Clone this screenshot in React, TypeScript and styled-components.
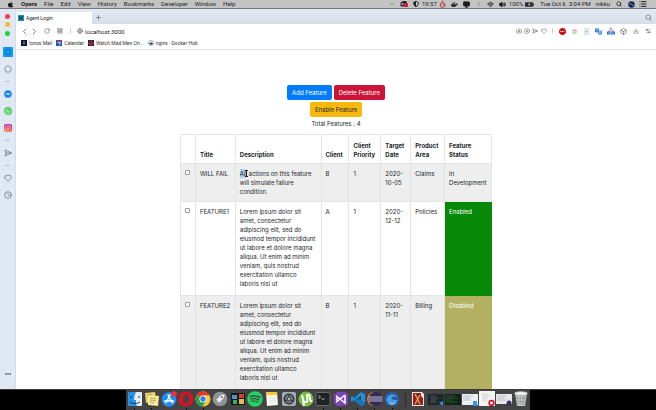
import React from "react";
import styled, { createGlobalStyle } from "styled-components";
import {
  Bluetooth,
  Box,
  Camera,
  ChevronLeft,
  ChevronRight,
  CircleX,
  Clock,
  Download,
  Globe,
  Heart,
  LayoutGrid,
  List,
  Monitor,
  Pentagon,
  Plus,
  RotateCw,
  Search,
  SendHorizontal,
  Settings2,
  Timer,
  Volume2,
  Wifi,
} from "lucide-react";
import { FaApple, FaDocker, FaFacebookMessenger, FaWhatsapp, FaInstagram, FaShieldAlt, FaSpotify } from "react-icons/fa";

const GlobalStyle = createGlobalStyle`
  * { box-sizing: border-box; }
  body {
    margin: 0;
    background: #000;
    color: #212529;
    font: 6px/9px Inter, "Liberation Sans", sans-serif;
  }
  button, input { font: inherit; color: inherit; }
`;

const chromeFont = `Roboto, "Liberation Sans", sans-serif`;

const Desktop = styled.div`
  display: flex;
  flex-direction: column;
  height: 100vh;
  overflow: hidden;
`;

const PlainButton = styled.button`
  display: inline-flex;
  align-items: center;
  justify-content: center;
  padding: 0;
  border: 0;
  background: none;
  white-space: nowrap;
`;

/* System menu bar */

const MenuBar = styled.header`
  display: flex;
  flex: none;
  justify-content: space-between;
  height: 9px;
  padding: 0 7px;
  background: #c3c3c3;
  border-bottom: 1px solid #74777d;
  color: #1d1d1d;
  font-family: ${chromeFont};
  line-height: 8px;
`;

const MenuList = styled.nav`
  display: flex;
  align-items: center;
  gap: 7px;
`;

const MenuItem = styled(PlainButton)<{ $strong?: boolean }>`
  font-weight: ${(p) => (p.$strong ? 700 : 400)};
`;

const StatusArea = styled.div`
  display: flex;
  align-items: center;
  font-weight: 400;
`;

const StatusSlot = styled(PlainButton)<{ $color?: string }>`
  width: 12px;
  color: ${(p) => p.$color ?? "#1d1d1d"};
`;

const StatusText = styled.span<{ $gap?: number }>`
  margin-right: ${(p) => p.$gap ?? 0}px;
  white-space: nowrap;
`;

/* Browser window */

const BrowserWindow = styled.div`
  display: grid;
  flex: 1;
  grid-template-columns: 16px minmax(0, 1fr);
  min-height: 0;
  background: #fff;
`;

const Sidebar = styled.aside`
  display: flex;
  flex-direction: column;
  align-items: center;
  padding: 3px 0 7px;
  background: #e0e8f3;
  border-right: 1px solid #d3dce9;
`;

const WindowControls = styled.div`
  display: flex;
  flex-direction: column;
  align-items: center;
  justify-content: space-around;
  height: 26px;
  margin-bottom: 5px;
`;

const TrafficLight = styled.button<{ $color: string }>`
  width: 5px;
  height: 5px;
  padding: 0;
  border: 0;
  border-radius: 50%;
  background: ${(p) => p.$color};
`;

const SideButton = styled(PlainButton)<{ $last?: boolean }>`
  width: 16px;
  height: 17px;
  margin-top: ${(p) => (p.$last ? "auto" : 0)};
  color: #5c626b;
`;

const SideRule = styled.hr`
  width: 5px;
  margin: 4px 0 3px;
  border: 0;
  border-top: 1px solid #bfc7d2;
`;

const Badge = styled.span<{ $color: string; $shape?: "circle" | "square" }>`
  display: inline-flex;
  align-items: center;
  justify-content: center;
  width: 8px;
  height: 8px;
  border-radius: ${(p) => (p.$shape === "square" ? "2px" : "50%")};
  background: ${(p) => p.$color};
  color: #fff;
`;

const Viewport = styled.div`
  display: flex;
  flex-direction: column;
  min-width: 0;
  min-height: 0;
`;

const TabStrip = styled.div`
  display: flex;
  flex: none;
  align-items: flex-end;
  height: 15px;
  background: linear-gradient(#e3eaf3, #d6dde8);
`;

const Tab = styled.button`
  display: flex;
  align-items: center;
  gap: 2px;
  width: 76px;
  height: 12px;
  padding: 0 2px;
  border: 0;
  background: #fff;
  font-family: ${chromeFont};
  font-size: 5px;
`;

const StripButton = styled(PlainButton)<{ $end?: boolean }>`
  width: 12px;
  height: 13px;
  margin-left: ${(p) => (p.$end ? "auto" : 0)};
  margin-right: ${(p) => (p.$end ? "2px" : 0)};
  color: #555;
`;

const Toolbar = styled.div`
  display: flex;
  flex: none;
  align-items: center;
  height: 14px;
  padding: 0 2px;
`;

const ToolButton = styled(PlainButton)<{ $width?: number }>`
  width: ${(p) => p.$width ?? 12}px;
  color: #555;
`;

const Divider = styled.span<{ $width: number }>`
  display: flex;
  justify-content: center;
  width: ${(p) => p.$width}px;
  &::before {
    content: "";
    width: 1px;
    height: 6px;
    background: #d5d5d5;
  }
`;

const Address = styled.input`
  flex: 1;
  min-width: 0;
  height: 11px;
  padding: 0;
  border: 0;
  background: none;
  font-family: ${chromeFont};
  font-weight: 400;
  outline: none;
`;

const Bookmarks = styled.nav`
  display: flex;
  flex: none;
  gap: 4px;
  height: 12px;
  padding: 0 5px 1px;
  border-bottom: 1px solid #e4e4e4;
`;

const Bookmark = styled.a`
  display: flex;
  align-items: center;
  gap: 2px;
  color: #333;
  font-family: ${chromeFont};
  font-size: 5px;
  text-decoration: none;
  white-space: nowrap;
`;

/* Page */

const Page = styled.main`
  display: flex;
  flex: 1;
  flex-direction: column;
  align-items: center;
  min-height: 0;
  padding-top: 35px;
  overflow: hidden;
`;

const ButtonRow = styled.div`
  display: flex;
  gap: 2px;
  margin-bottom: 2px;
`;

const variants = {
  primary: ["#007bff", "#fff"],
  danger: ["#cb1437", "#fff"],
  warning: ["#f7b90d", "#212529"],
} as const;

const ActionButton = styled.button<{ $variant: keyof typeof variants }>`
  height: 15px;
  padding: 0 5px;
  border: 0;
  border-radius: 2px;
  background: ${(p) => variants[p.$variant][0]};
  color: ${(p) => variants[p.$variant][1]};
  white-space: nowrap;
`;

const Total = styled.p`
  margin: 0 0 6px;
`;

const Table = styled.table`
  flex: none;
  width: 100%;
  max-width: 312px;
  border-collapse: collapse;
  table-layout: fixed;
`;

const Col = styled.col<{ $share: number }>`
  width: ${(p) => (p.$share * 100) / 312}%;
`;

const HeadCell = styled.th`
  height: 29px;
  padding: 4px;
  border: 1px solid #e1e4e8;
  font-weight: 700;
  text-align: left;
  vertical-align: bottom;
`;

const Row = styled.tr<{ $height: number }>`
  height: ${(p) => p.$height}px;
  &:nth-child(odd) {
    background: #eeeeee;
  }
`;

const statusColors: Record<string, string> = {
  Enabled: "#078807",
  Disabled: "#b3b062",
};

const Cell = styled.td<{ $status?: string }>`
  padding: 5px 4px 4px;
  border: 1px solid #e1e4e8;
  border-color: ${(p) => statusColors[p.$status ?? ""] ?? "#e1e4e8"};
  background: ${(p) => statusColors[p.$status ?? ""] ?? "transparent"};
  color: ${(p) => (statusColors[p.$status ?? ""] ? "#fff" : "inherit")};
  vertical-align: top;
`;

const Check = styled.input`
  display: block;
  width: 5px;
  height: 5px;
  margin: 1px 0 0;
  appearance: none;
  border: 1px solid #999;
  border-radius: 1px;
  background: #fff;
  &:checked {
    background: #007bff;
  }
`;

const Description = styled.div`
  position: relative;
  isolation: isolate;
`;

const Selection = styled.span`
  position: absolute;
  z-index: -1;
  top: 0;
  left: 0;
  width: 6px;
  height: 9px;
  background: #a9cff5;
`;

const TextCursor = styled.svg`
  position: absolute;
  top: 1px;
  left: 5px;
`;

/* Dock */

const DockArea = styled.footer`
  display: flex;
  flex: none;
  justify-content: center;
  height: 21px;
  border-top: 1px solid #3c3c3c;
  background: #000;
`;

const Dock = styled.div`
  display: flex;
  width: 404px;
  background: #444;
`;

const DockItem = styled.button<{ $running?: boolean }>`
  display: flex;
  flex: 1;
  flex-direction: column;
  align-items: center;
  gap: 1px;
  padding: 1px 0 0;
  border: 0;
  background: none;
  &::after {
    content: "";
    width: 1px;
    height: 1px;
    background: ${(p) => (p.$running ? "#000" : "transparent")};
  }
`;

const DockRule = styled.span`
  width: 9px;
  &::before {
    content: "";
    display: block;
    width: 1px;
    height: 15px;
    margin: 2px auto;
    background: #2c2c2c;
  }
`;

const Glyph = ({ children, size = 16 }: { children: React.ReactNode; size?: number }) => (
  <svg width={size} height={size} viewBox="0 0 16 16" aria-hidden="true">
    {children}
  </svg>
);

type App = { name: string; running?: boolean; art: React.ReactNode };

const apps: App[] = [
  {
    name: "Finder",
    running: true,
    art: (
      <>
        <rect x="1" y="1" width="14" height="14" rx="1" fill="#e6edf5" />
        <path d="M1 1h8C7 5 7 8 7 9h2c0 3 0 4 1 6H1z" fill="#2793e6" />
        <path d="M4 5v2M12 5v2M3 11c3 2 7 2 10 0" stroke="#17324d" fill="none" />
      </>
    ),
  },
  {
    name: "Stickies",
    running: true,
    art: (
      <>
        <path d="M1 2l10-1 1 9-10 2z" fill="#e9d672" />
        <path d="M4 4l11 1-1 10-10-1z" fill="#f6e99a" />
        <path d="M6 7l6 .5M6 9l6 .5M6 11l4 .5M3 4l5-.5" stroke="#a38c36" strokeWidth=".7" />
      </>
    ),
  },
  {
    name: "App Store",
    art: (
      <>
        <circle cx="8" cy="8.500" r="7.300" fill="#1b8df3" />
        <path d="M9 4L5 12M7 4l4.500 8M3.500 10h9" stroke="#fff" strokeWidth="1.400" strokeLinecap="round" />
        <circle cx="13" cy="3" r="2.800" fill="#f02f36" />
      </>
    ),
  },
  {
    name: "Opera",
    running: true,
    art: (
      <path
        fillRule="evenodd"
        d="M8 .5a7.500 7.500 0 100 15 7.500 7.500 0 000-15zM8 3c2 0 3 2.200 3 5s-1 5-3 5-3-2.200-3-5 1-5 3-5z"
        fill="#dc1020"
      />
    ),
  },
  {
    name: "Chrome",
    running: true,
    art: (
      <>
        <circle cx="8" cy="8" r="7.500" fill="#f8cc2e" />
        <path d="M8 8L1.500 4.300a7.500 7.500 0 0113-.1H8z" fill="#e5382d" />
        <path d="M8 8L1.500 4.300A7.500 7.500 0 007.500 15.500L11 10z" fill="#28a04b" />
        <circle cx="8" cy="8" r="3.600" fill="#fff" />
        <circle cx="8" cy="8" r="2.700" fill="#397fe8" />
      </>
    ),
  },
  {
    name: "Launchpad",
    art: (
      <>
        <circle cx="8" cy="8" r="7.300" fill="#8d9399" />
        <path d="M12.500 3.500c-3 0-5 1.500-6.500 4l-2 .5 1.500 1L5 11l2-.5 1 1.500.7-2.200c2.500-1.500 3.800-3.500 3.800-6.300z" fill="#f4f4f4" />
        <circle cx="9.800" cy="6.200" r="1" fill="#555" />
      </>
    ),
  },
  {
    name: "Mission Control",
    art: (
      <>
        <rect x="1" y="2" width="14" height="12" rx="1" fill="#15191c" />
        <path d="M2 4h5v4H2z" fill="#4d94ce" />
        <path d="M9 3h5v4H9z" fill="#ce4138" />
        <path d="M3 9h4v4H3z" fill="#42ad57" />
        <path d="M9 8h5v5H9z" fill="#e4bd4b" />
      </>
    ),
  },
  { name: "Spotify", art: null },
  {
    name: "Notes",
    art: (
      <>
        <path d="M2 1l11 0 1 13-11 1z" fill="#faf9f2" />
        <path d="M2 1h11l.3 3-11 .3z" fill="#f4c733" />
        <path d="M5 7h7M5 9h7M5 11h7" stroke="#d2d0c8" strokeWidth=".6" />
      </>
    ),
  },
  {
    name: "System Preferences",
    art: (
      <>
        <rect x="1" y="1" width="14" height="14" rx="2" fill="#a3abb2" />
        <circle cx="8" cy="8" r="4.800" fill="#7b8187" stroke="#25292c" strokeWidth="1.300" />
        <circle cx="8" cy="8" r="2" fill="#b4babf" stroke="#303437" />
        <path d="M8 6V3M9.700 9l2.700 1.500M6.300 9l-2.700 1.500" stroke="#303437" />
      </>
    ),
  },
  {
    name: "Torrent client",
    art: (
      <>
        <circle cx="8" cy="8" r="7.500" fill="#70be3b" />
        <path d="M4 4l1.500 6c.5 1.800 3.700 1.500 4-.5L9 4l2.300-.3 1 5.300c.3 1.500 1 1.500 2 1" fill="none" stroke="#fff" strokeWidth="2" />
        <path d="M5 9l1 6" stroke="#fff" strokeWidth="2" />
      </>
    ),
  },
  {
    name: "Terminal",
    running: true,
    art: (
      <>
        <rect x="1" y="1.500" width="14" height="13" rx="1" fill="#202326" stroke="#8a8d8f" strokeWidth=".6" />
        <path d="M3.500 4.500l2 1.500-2 1.500M6.500 8h3" stroke="#ddd" fill="none" strokeWidth=".8" />
      </>
    ),
  },
  {
    name: "Visual Studio",
    running: true,
    art: (
      <>
        <path d="M1 4l3-3h8l3 2v10l-3 2H4l-3-3z" fill="#7c45b8" />
        <path d="M4 5.500v5L7 8zM12 4v8L4 5.500m0 5L12 4" fill="none" stroke="#fff" strokeWidth="1.500" />
      </>
    ),
  },
  {
    name: "Code editor",
    running: true,
    art: (
      <>
        <path d="M11 1l4 2v10l-4 2-7-6-2 2-1-1V6l1-1 2 2z" fill="#1d91df" />
        <path d="M11 4.500v7L6.500 8z" fill="#35434e" />
        <path d="M2 5l9 10 4-2V11z" fill="#1275b7" />
      </>
    ),
  },
  {
    name: "Eclipse",
    running: true,
    art: (
      <>
        <circle cx="7.300" cy="8" r="7.200" fill="#f08c25" />
        <circle cx="8.500" cy="8" r="7.200" fill="#342958" />
        <path d="M1.500 6h14M1.300 8h14.400M1.500 10h14" stroke="#d2cde4" strokeWidth=".9" />
      </>
    ),
  },
  {
    name: "Web browser",
    running: true,
    art: (
      <>
        <circle cx="8" cy="8" r="7.300" fill="#2b5ca5" />
        <path d="M2.500 9C3 3 11 1 13.500 7c-2-2-5-2-6 0 .5 2 3 2.300 6 2-2 5-10 6-11 0z" fill="#42a1e9" />
        <path d="M5 12c2 2 6 1 7-1" stroke="#bfe2f9" fill="none" />
      </>
    ),
  },
];

const windows: App[] = [
  {
    name: "Documents",
    art: (
      <>
        <path d="M2 1h10l2 2v12H2z" fill="#f1e5dc" />
        <path d="M3 2h8v3l2 2v7H3z" fill="#8e2320" />
        <path d="M5 3l5 10M10 4l-5 9" stroke="#e8aa57" strokeWidth="1.200" />
      </>
    ),
  },
  {
    name: "Editor window",
    art: (
      <>
        <rect x="0" y="3" width="16" height="11" fill="#20272d" />
        <path d="M2 5h5M3 7h7M3 9h5M2 11h6" stroke="#60717b" strokeWidth=".7" />
        <path d="M11 12l4-2v5z" fill="#2298e5" />
      </>
    ),
  },
  {
    name: "Terminal window",
    art: (
      <>
        <rect x="0" y="3" width="16" height="11" fill="#132416" />
        <path d="M1 5h9M1 7h12M1 9h7M1 11h11" stroke="#2b6532" strokeWidth=".8" />
      </>
    ),
  },
  {
    name: "Finder window",
    art: (
      <>
        <rect x="0" y="3" width="16" height="11" fill="#eef0f2" />
        <path d="M1 5h10M1 7h7M1 9h8" stroke="#9daab8" strokeWidth=".7" />
        <path d="M11 10h4v5h-4z" fill="#2d97e7" />
      </>
    ),
  },
  {
    name: "Opera window",
    art: (
      <>
        <rect x="0" y="0" width="16" height="15" fill="#f4f4f4" />
        <path d="M3 3h6M3 5h8M3 7h6M3 9h5" stroke="#c3c6ca" strokeWidth=".8" />
        <circle cx="12.500" cy="12" r="2.300" fill="#fff" stroke="#dc1020" strokeWidth="1.700" />
      </>
    ),
  },
  {
    name: "Eclipse window",
    art: (
      <>
        <rect x="0" y="3" width="16" height="10" fill="#e9e9ec" />
        <path d="M1 5h9M1 7h7M1 9h9" stroke="#a4a6ae" strokeWidth=".6" />
        <circle cx="13" cy="12" r="2.500" fill="#3b3162" />
      </>
    ),
  },
  {
    name: "Trash",
    art: (
      <>
        <path d="M2 2l2 13h8l2-13z" fill="#c7c9ca" />
        <path d="M4 4l1.500 10M7 4l.5 10M10 4l-.5 10M12 4l-1.500 10M3 7h10M3.500 11h9" stroke="#898d8f" strokeWidth=".6" />
        <ellipse cx="8" cy="2.500" rx="6.500" ry="2" fill="#efefef" stroke="#a0a0a0" strokeWidth=".6" />
      </>
    ),
  },
];

const DockEntry = ({ app }: { app: App }) => (
  <DockItem $running={app.running} aria-label={app.name}>
    {app.art ? <Glyph>{app.art}</Glyph> : <FaSpotify size={16} color="#1ed35e" />}
  </DockItem>
);

const menus = ["File", "Edit", "View", "History", "Bookmarks", "Developer", "Window", "Help"];

const bookmarks: { label: string; icon: React.ReactNode }[] = [
  {
    label: "Ionos Mail",
    icon: (
      <>
        <path d="M0 0h16v16H0z" fill="#0b1835" />
        <path d="M8 4v8" stroke="#fff" strokeWidth="2" />
      </>
    ),
  },
  {
    label: "Calendar",
    icon: (
      <>
        <path d="M0 0h16v16H0z" fill="#2f55bd" />
        <path d="M4 6h8l-3 7" stroke="#fff" strokeWidth="2" fill="none" />
        <path d="M0 0h16v3H0z" fill="#a32d60" />
      </>
    ),
  },
  {
    label: "Watch Mad Men On...",
    icon: (
      <>
        <path d="M0 0h16v16H0z" fill="#35151e" />
        <path d="M0 7h16v3H0z" fill="#d33041" />
        <path d="M3 3h10M3 13h10" stroke="#89748a" strokeWidth="2" />
      </>
    ),
  },
  {
    label: "nginx - Docker Hub",
    icon: (
      <>
        <circle cx="8" cy="8" r="7" fill="#f0f3f6" stroke="#75808a" strokeWidth="1.500" />
        <path d="M3 8h10c0 5-8 6-10 0zM5 5h5v3" fill="#283f56" />
      </>
    ),
  },
];

const lorem =
  "Lorem ipsum dolor sit amet, consectetur adipiscing elit, sed do eiusmod tempor incididunt ut labore et dolore magna aliqua. Ut enim ad minim veniam, quis nostrud exercitation ullamco laboris nisi ut";

const features = [
  {
    title: "WILL FAIL",
    text: "All actions on this feature will simulate failure condition.",
    selected: true,
    client: "B",
    date: "2020-10-05",
    area: "Claims",
    status: "In Development",
    height: 38,
  },
  { title: "FEATURE1", text: lorem, client: "A", date: "2020-12-12", area: "Policies", status: "Enabled", height: 94 },
  { title: "FEATURE2", text: lorem, client: "B", date: "2020-11-11", area: "Billing", status: "Disabled", height: 94 },
];

const columnShares = [15, 40, 86, 28, 32, 30, 34, 47];
const headings = ["Title", "Description", "Client", "Client Priority", "Target Date", "Product Area", "Feature Status"];

const SystemMenu = () => (
  <MenuBar>
    <MenuList aria-label="System menu">
      <MenuItem aria-label="Apple menu">
        <FaApple size={7} />
      </MenuItem>
      <MenuItem $strong>Opera</MenuItem>
      {menus.map((menu) => (
        <MenuItem key={menu}>{menu}</MenuItem>
      ))}
    </MenuList>
    <StatusArea>
      <StatusSlot aria-label="Status">
        <Glyph size={6}>
          <circle cx="8" cy="8" r="7" fill="#d5d5d5" stroke="#9b9b9b" />
          <circle cx="8" cy="8" r="3" fill="#55a35c" />
        </Glyph>
      </StatusSlot>
      <StatusSlot aria-label="Recording">
        <Glyph size={8}>
          <path d="M1 5l5-3h6l2 3v8H1z" fill="#2c2c2c" />
          <circle cx="5" cy="8" r="2" fill="#bbb" />
          <path d="M8 7h8v7H8z" fill="#e0182d" />
        </Glyph>
      </StatusSlot>
      <StatusSlot aria-label="Shield">
        <FaShieldAlt size={6} />
      </StatusSlot>
      <StatusText>19:57</StatusText>
      <StatusSlot aria-label="Timer" $color="#c8232c">
        <Timer size={7} strokeWidth={3} />
      </StatusSlot>
      <StatusSlot aria-label="Docker">
        <FaDocker size={7} />
      </StatusSlot>
      <StatusSlot aria-label="Display">
        <Monitor size={7} strokeWidth={3} fill="#1d1d1d" />
      </StatusSlot>
      <StatusSlot aria-label="Bluetooth" $color="#9a9a9a">
        <Bluetooth size={6} />
      </StatusSlot>
      <StatusSlot aria-label="Wi-Fi">
        <Wifi size={7} strokeWidth={3} />
      </StatusSlot>
      <StatusSlot aria-label="Volume">
        <Volume2 size={7} strokeWidth={3} fill="#1d1d1d" />
      </StatusSlot>
      <StatusText>100%</StatusText>
      <StatusSlot aria-label="Battery">
        <Glyph size={9}>
          <rect x="0" y="4" width="14" height="8" rx="1" fill="#2a2a2a" />
          <path d="M14 6h2v4h-2z" fill="#2a2a2a" />
          <path d="M8 4l-3 4h2l-1 4 4-5H8z" fill="#c3c3c3" />
        </Glyph>
      </StatusSlot>
      <StatusText $gap={5} />
      <StatusText $gap={3}>Tue Oct 6</StatusText>
      <StatusText $gap={5}>3:04 PM</StatusText>
      <StatusText $gap={3}>nikku</StatusText>
      <StatusSlot aria-label="Spotlight">
        <Search size={6} strokeWidth={3} />
      </StatusSlot>
      <StatusSlot aria-label="Siri">
        <Glyph size={7}>
          <circle cx="8" cy="8" r="7.500" fill="#1f2450" />
          <path d="M2 8q3-5 6 0t6 0" stroke="#48b9e8" strokeWidth="2" fill="none" />
        </Glyph>
      </StatusSlot>
      <StatusSlot aria-label="Notifications">
        <List size={8} strokeWidth={3} />
      </StatusSlot>
    </StatusArea>
  </MenuBar>
);

const SidePanel = () => (
  <Sidebar>
    <WindowControls>
      <TrafficLight $color="#f03e4d" aria-label="Close" />
      <TrafficLight $color="#f5b82e" aria-label="Minimize" />
      <TrafficLight $color="#20d33a" aria-label="Zoom" />
    </WindowControls>
    <SideButton aria-label="Speed dial">
      <Glyph size={10}>
        <rect width="16" height="16" rx="1" fill="#149af0" />
        <rect x="4" y="4" width="8" height="8" rx="3" fill="none" stroke="#0670c0" strokeWidth="1.500" />
      </Glyph>
    </SideButton>
    <SideButton aria-label="Home">
      <Pentagon size={8} strokeWidth={2} />
    </SideButton>
    <SideRule />
    <SideButton aria-label="Messenger">
      <FaFacebookMessenger size={8} color="#1682ee" />
    </SideButton>
    <SideButton aria-label="WhatsApp">
      <Badge $color="#45cc57">
        <FaWhatsapp size={6} />
      </Badge>
    </SideButton>
    <SideButton aria-label="Instagram">
      <Badge $color="linear-gradient(20deg, #f6a33a, #e52e5c 50%, #a52cc0)" $shape="square">
        <FaInstagram size={6} />
      </Badge>
    </SideButton>
    <SideRule />
    <SideButton aria-label="My Flow">
      <SendHorizontal size={8} strokeWidth={2} />
    </SideButton>
    <SideRule />
    <SideButton aria-label="Favourites">
      <Heart size={8} strokeWidth={2} />
    </SideButton>
    <SideButton aria-label="History">
      <Clock size={8} strokeWidth={2} />
    </SideButton>
    <SideButton $last aria-label="More">
      <Glyph size={6}>
        <path d="M0 6h4v4H0zM6 6h4v4H6zM12 6h4v4h-4z" fill="#50555c" />
      </Glyph>
    </SideButton>
  </Sidebar>
);

const BrowserChrome = () => (
  <>
    <TabStrip>
      <Tab>
        <Glyph size={6}>
          <path d="M0 0h16v16H0z" fill="#1796b8" />
          <path d="M3 13L13 3M3 4l10 9" stroke="#173e4c" strokeWidth="3" />
        </Glyph>
        Agent Login
      </Tab>
      <StripButton aria-label="New tab">
        <Plus size={7} />
      </StripButton>
      <StripButton $end aria-label="Search tabs">
        <Search size={7} />
      </StripButton>
    </TabStrip>
    <Toolbar>
      <ToolButton aria-label="Back">
        <ChevronLeft size={9} />
      </ToolButton>
      <ToolButton $width={9} aria-label="Forward">
        <ChevronRight size={9} />
      </ToolButton>
      <ToolButton $width={15} aria-label="Reload">
        <RotateCw size={6} />
      </ToolButton>
      <ToolButton aria-label="Speed dial">
        <LayoutGrid size={6} />
      </ToolButton>
      <Divider $width={8} />
      <ToolButton $width={11} aria-label="Site information">
        <Globe size={6} />
      </ToolButton>
      <Address aria-label="Address" defaultValue="localhost:3000" />
      <ToolButton $width={8} aria-label="Snapshot">
        <Camera size={6} />
      </ToolButton>
      <ToolButton $width={8} aria-label="Block">
        <CircleX size={6} />
      </ToolButton>
      <ToolButton $width={8} aria-label="Send to flow">
        <SendHorizontal size={6} />
      </ToolButton>
      <ToolButton $width={10} aria-label="Save page">
        <Heart size={6} />
      </ToolButton>
      <Divider $width={7} />
      <ToolButton aria-label="Ad blocker">
        <Glyph size={7}>
          <path d="M5 0h6l5 5v6l-5 5H5l-5-5V5z" fill="#c9151e" />
          <path d="M3 8h10" stroke="#fff" strokeWidth="2" strokeDasharray="2.500 1" />
        </Glyph>
      </ToolButton>
      <ToolButton aria-label="Colour extension">
        <Glyph size={7}>
          <path d="M2 8a6 6 0 0112 0" fill="#eeb3bc" />
          <path d="M3 8h10v6H3z" fill="#b8e0b8" />
        </Glyph>
      </ToolButton>
      <ToolButton aria-label="Document extension">
        <Glyph size={7}>
          <path d="M3 1h10v14H3z" fill="#eef2f7" stroke="#afbac8" />
          <circle cx="8" cy="8" r="2.500" fill="#9dc6b0" />
        </Glyph>
      </ToolButton>
      <ToolButton $width={13} aria-label="Translate">
        <Glyph size={7}>
          <path d="M0 1h9v9H0z" fill="#2877e6" />
          <path d="M7 6h9v9H7z" fill="#4b91ed" />
          <path d="M2 4h5M4.500 3v5M9 9h5M11 8v5" stroke="#fff" />
        </Glyph>
      </ToolButton>
      <ToolButton aria-label="Account extension">
        <Glyph size={8}>
          <path d="M8 1l6 8H2z" fill="#d64a51" />
          <circle cx="8" cy="7" r="3" fill="#eee" />
          <path d="M0 9h16v6H0z" fill="#2d6fdd" />
          <path d="M3 12h10" stroke="#fff" strokeWidth="2" strokeDasharray="2 1" />
        </Glyph>
      </ToolButton>
      <ToolButton aria-label="Extensions">
        <Box size={7} />
      </ToolButton>
      <ToolButton $width={13} aria-label="Downloads">
        <Download size={6} />
      </ToolButton>
      <ToolButton aria-label="Easy setup">
        <Settings2 size={6} />
      </ToolButton>
    </Toolbar>
    <Bookmarks aria-label="Bookmarks">
      {bookmarks.map((b) => (
        <Bookmark key={b.label} href="#">
          <Glyph size={6}>{b.icon}</Glyph>
          {b.label}
        </Bookmark>
      ))}
    </Bookmarks>
  </>
);

const FeaturePage = () => (
  <Page>
    <ButtonRow>
      <ActionButton $variant="primary">Add Feature</ActionButton>
      <ActionButton $variant="danger">Delete Feature</ActionButton>
    </ButtonRow>
    <ButtonRow>
      <ActionButton $variant="warning">Enable Feature</ActionButton>
    </ButtonRow>
    <Total>Total Features : 4</Total>
    <Table>
      <colgroup>
        {columnShares.map((share, i) => (
          <Col key={i} $share={share} />
        ))}
      </colgroup>
      <thead>
        <tr>
          <HeadCell aria-label="Select" />
          {headings.map((h) => (
            <HeadCell key={h} scope="col">
              {h}
            </HeadCell>
          ))}
        </tr>
      </thead>
      <tbody>
        {features.map((f) => (
          <Row key={f.title} $height={f.height}>
            <Cell>
              <Check type="checkbox" aria-label={`Select ${f.title}`} />
            </Cell>
            <Cell>{f.title}</Cell>
            <Cell>
              <Description>
                {f.selected && <Selection />}
                {f.text}
                {f.selected && (
                  <TextCursor width="3" height="7" viewBox="0 0 3 7" aria-hidden="true">
                    <path d="M0 .5h3M1.500 0v7M0 6.500h3" stroke="#222" strokeWidth="1" />
                  </TextCursor>
                )}
              </Description>
            </Cell>
            <Cell>{f.client}</Cell>
            <Cell>1</Cell>
            <Cell>{f.date}</Cell>
            <Cell>{f.area}</Cell>
            <Cell $status={f.status}>{f.status}</Cell>
          </Row>
        ))}
      </tbody>
    </Table>
  </Page>
);

export default function App() {
  return (
    <>
      <GlobalStyle />
      <Desktop>
        <SystemMenu />
        <BrowserWindow>
          <SidePanel />
          <Viewport>
            <BrowserChrome />
            <FeaturePage />
          </Viewport>
        </BrowserWindow>
        <DockArea>
          <Dock>
            {apps.map((app) => (
              <DockEntry key={app.name} app={app} />
            ))}
            <DockRule />
            {windows.map((app) => (
              <DockEntry key={app.name} app={app} />
            ))}
          </Dock>
        </DockArea>
      </Desktop>
    </>
  );
}
